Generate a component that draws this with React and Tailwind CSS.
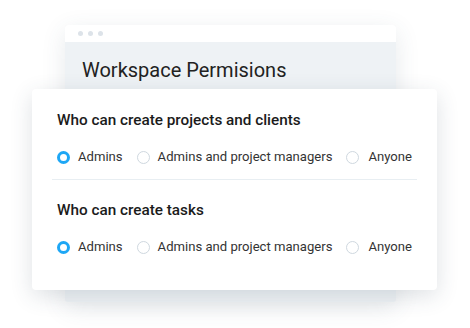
import React from 'react';

const options = ['Admins', 'Admins and project managers', 'Anyone'];

const Radio = ({ checked }) => (
  <span
    className={`inline-block h-[13px] w-[13px] shrink-0 rounded-full bg-white ${
      checked ? 'border-[3px] border-[#1ea7f5]' : 'border border-[#cfd8df]'
    }`}
  />
);

const Group = ({ title }) => (
  <div>
    <h3 className="text-[15.3px] font-medium leading-[20px] text-[#1b1b1b]">{title}</h3>
    <div className="mt-[18px] flex items-center whitespace-nowrap">
      <div className="flex shrink-0 items-center">
        <Radio checked />
        <span className="ml-[8px] text-[13.1px] leading-[18px] text-[#333]">{options[0]}</span>
      </div>
      <div className="ml-[14px] flex shrink-0 items-center">
        <Radio />
        <span className="ml-[8px] text-[13.1px] leading-[18px] text-[#333]">{options[1]}</span>
      </div>
      <div className="ml-[14px] flex shrink-0 items-center">
        <Radio />
        <span className="ml-[9px] text-[13.1px] leading-[18px] text-[#333]">{options[2]}</span>
      </div>
    </div>
  </div>
);

export default function App() {
  return (
    <div
      className="h-[328px] w-[470px] overflow-hidden bg-white pt-[25px]"
      style={{ fontFamily: 'Roboto, "Liberation Sans", sans-serif' }}
    >
      {/* Back window */}
      <div className="ml-[65px] flex h-[277px] w-[331px] flex-col rounded-[3px] bg-[#eef2f5] shadow-[0_6px_24px_rgba(60,80,100,0.12)]">
        <div className="flex h-[17px] items-center gap-[5px] rounded-t-[3px] bg-white pl-[13px]">
          <span className="h-[5px] w-[5px] rounded-full bg-[#dde3e9]" />
          <span className="h-[5px] w-[5px] rounded-full bg-[#dde3e9]" />
          <span className="h-[5px] w-[5px] rounded-full bg-[#dde3e9]" />
        </div>
        <div className="pl-[17px] pt-[15px]">
          <h2 className="text-[20px] leading-[26px] text-[#222]">Workspace Permisions</h2>
        </div>
      </div>

      {/* Front card */}
      <div className="relative ml-[32px] mt-[-213px] h-[201px] w-[405px] rounded-[4px] bg-white px-[25px] pt-[21px] shadow-[0_6px_22px_rgba(50,70,90,0.16)]">
        <Group title="Who can create projects and clients" />
        <div className="-mx-[5px] mb-[20px] mt-[13px] h-px bg-[#e8eef2]" />
        <Group title="Who can create tasks" />
      </div>
    </div>
  );
}
